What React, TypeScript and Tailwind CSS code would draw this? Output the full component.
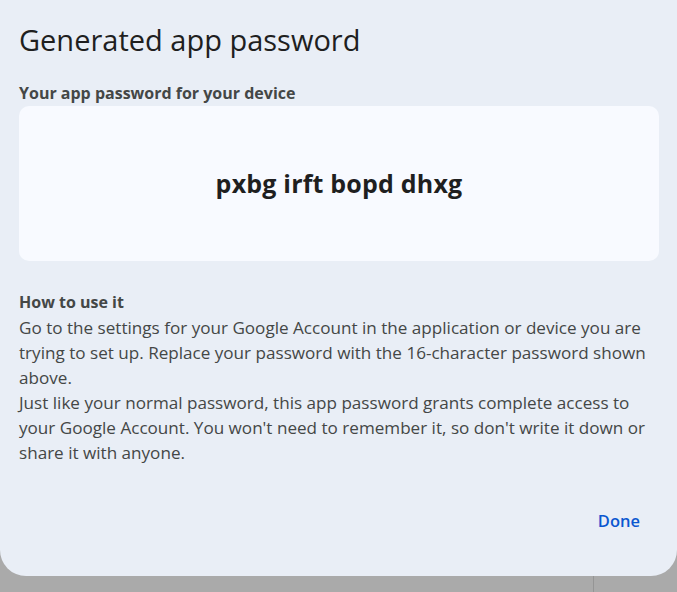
export default function App() {
  return (
    <div className="w-[677px] h-[592px] bg-[#aaaaaa] flex flex-col overflow-hidden" style={{ fontFamily: "'Open Sans', 'Noto Sans', sans-serif" }}>
      {/* Dialog */}
      <div className="h-[576px] shrink-0 bg-[#e9eef6] rounded-b-[26px] flex flex-col pl-[19px] pr-[18px] pt-[21px]">
        <h2 className="text-[29px] leading-[38px] text-[#1f1f1f] font-normal">
          Generated app password
        </h2>
        <div className="mt-[23px] text-[16px] leading-[22px] font-bold text-[#444746]">
          Your app password for your device
        </div>
        <div className="mt-[2px] h-[155px] rounded-[10px] bg-[#f8faff] flex items-center justify-center">
          <span className="text-[25px] font-bold text-[#1f1f1f] tracking-[0.2px]">pxbg irft bopd dhxg</span>
        </div>
        <div className="mt-[29px] text-[17.1px] leading-[25px] text-[#444746]">
          <div className="font-bold text-[16px]">How to use it</div>
          <div>
            Go to the settings for your Google Account in the application or device you are trying to set up. Replace your
            password with the 16-character password shown above.
          </div>
          <div>
            Just like your normal password, this app password grants complete access to your Google Account. You won't
            need to remember it, so don't write it down or share it with anyone.
          </div>
        </div>
        <div className="mt-auto mb-[44px] flex justify-end pr-[19px]">
          <button className="text-[16.5px] leading-[22px] font-semibold text-[#0b57d0]">Done</button>
        </div>
      </div>
      {/* Background below the dialog */}
      <div className="flex-1 flex">
        <div className="w-[594px] border-r border-[#959595]" />
      </div>
    </div>
  );
}
